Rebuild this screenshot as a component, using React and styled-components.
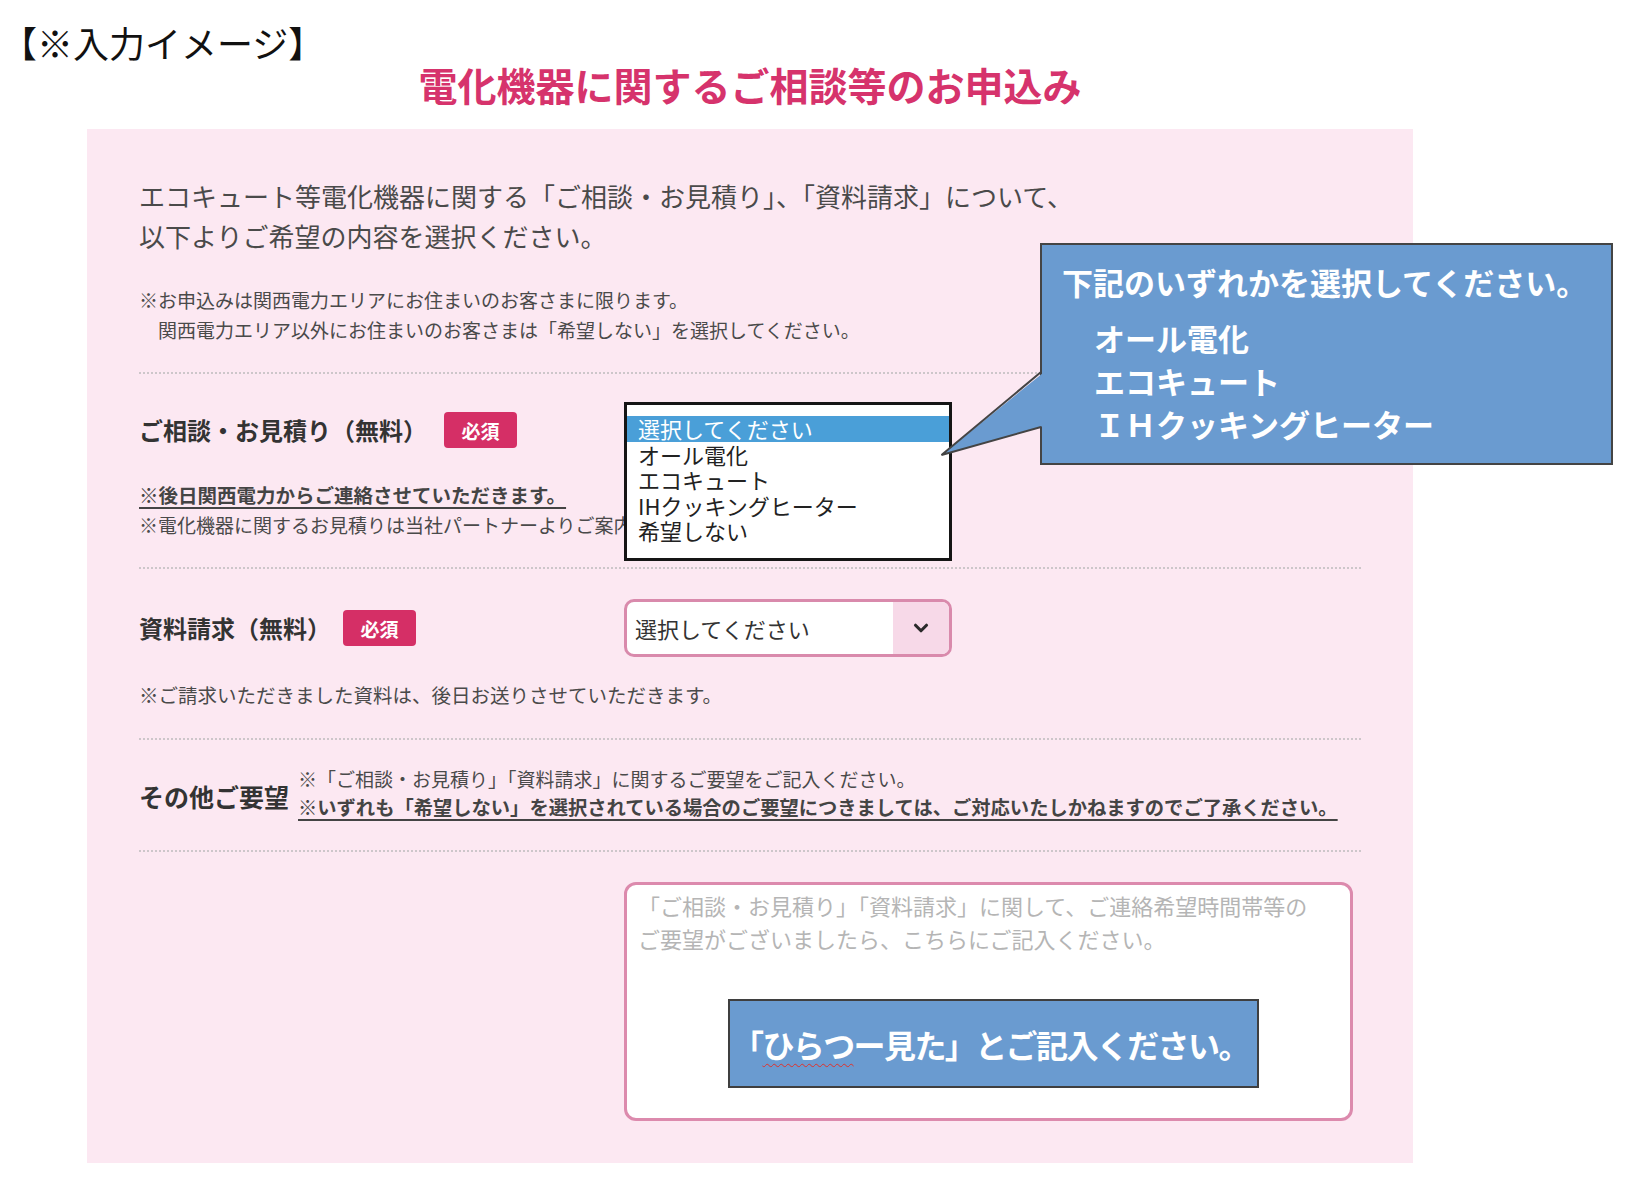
import React from "react";
import styled, { createGlobalStyle } from "styled-components";
import { ChevronDown } from "lucide-react";

const GlobalStyle = createGlobalStyle`
  html, body { margin: 0; padding: 0; background: #ffffff; }
  body { font-family: "Noto Sans CJK JP", "Noto Sans", sans-serif; color: #333; }
  * { box-sizing: border-box; }
`;

const Page = styled.div`
  position: relative;
  width: 1634px;
  min-height: 1190px;
  padding-top: 22px;
`;

const Caption = styled.div`
  margin: 0 0 0 1px;
  font-size: 36px;
  line-height: 41px;
  color: #111;
`;

const Title = styled.h1`
  margin: 0 0 0 87px;
  width: 1326px;
  text-align: center;
  font-size: 39px;
  line-height: 42px;
  font-weight: 700;
  color: #d6336c;
`;

const Panel = styled.section`
  margin: 24px 0 0 87px;
  width: 1326px;
  background: #fce8f2;
  padding: 47px 52px 42px;
`;

const Intro = styled.p`
  margin: 0;
  font-size: 26px;
  line-height: 40px;
  color: #4a4a4a;
`;

const Notice = styled.p`
  margin: 29px 0 0;
  font-size: 19px;
  line-height: 30px;
  color: #4a4a4a;
`;

const Indent = styled.span`
  display: block;
  padding-left: 1em;
`;

const Divider = styled.hr`
  margin: ${(p) => p.$gap}px 0 0;
  border: 0;
  border-top: 2px dotted #cdc6ca;
  height: 0;
`;

const Section = styled.div`
  padding-top: ${(p) => p.$top}px;
`;

const FieldRow = styled.div`
  display: grid;
  grid-template-columns: 485px 328px;
  align-items: center;
  height: 58px;
`;

const LabelGroup = styled.div`
  display: flex;
  align-items: center;
  gap: ${(p) => p.$gap || 16}px;
`;

const FieldLabel = styled.span`
  font-size: 24px;
  line-height: 30px;
  font-weight: 700;
  color: #333;
  white-space: nowrap;
`;

const Badge = styled.span`
  display: inline-flex;
  align-items: center;
  justify-content: center;
  width: 73px;
  height: 36px;
  border-radius: 4px;
  background: #d52f66;
  color: #fff;
  font-size: 19px;
  font-weight: 700;
`;

const SelectSlot = styled.div`
  position: relative;
  height: 58px;
`;

const ListBox = styled.div`
  position: absolute;
  top: 1px;
  left: 0;
  width: 328px;
  height: 159px;
  border: 3px solid #151515;
  background: #fff;
  padding-top: 11px;
  z-index: 2;
`;

const Option = styled.div`
  height: 25.6px;
  line-height: 25.6px;
  padding-left: 11px;
  font-size: 22px;
  color: ${(p) => (p.$active ? "#fff" : "#222")};
  background: ${(p) => (p.$active ? "#4a9fd8" : "transparent")};
  white-space: nowrap;
`;

const SelectBox = styled.div`
  display: flex;
  height: 58px;
  border: 3px solid #d98aac;
  border-radius: 10px;
  background: #fff;
  overflow: hidden;
`;

const SelectValue = styled.span`
  flex: 1;
  display: flex;
  align-items: center;
  padding-left: 8px;
  font-size: 22px;
  color: #333;
`;

const SelectArrow = styled.span`
  width: 56px;
  display: flex;
  align-items: center;
  justify-content: center;
  background: #f7d9e8;
  color: #2a2a2a;
`;

const FieldNotes = styled.div`
  margin-top: ${(p) => p.$gap}px;
  font-size: ${(p) => p.$size || 19}px;
  line-height: 30px;
  color: #4a4a4a;
  white-space: nowrap;
`;

const Strong = styled.span`
  display: block;
  font-size: ${(p) => p.$size || 19.5}px;
  font-weight: 700;
  color: #444;
  text-decoration: underline;
  text-underline-offset: 4px;
  text-decoration-thickness: 1.5px;
  width: max-content;
`;

const OtherRow = styled.div`
  display: flex;
  align-items: center;
  gap: 9px;
`;

const OtherLabel = styled.span`
  font-size: 25px;
  line-height: 30px;
  font-weight: 700;
  color: #333;
  padding-top: 6px;
  white-space: nowrap;
`;

const OtherNotes = styled.div`
  font-size: 19px;
  line-height: 29px;
  color: #4a4a4a;
  white-space: nowrap;
`;

const TextWrap = styled.div`
  position: relative;
  margin: 30px 0 0 485px;
  width: 729px;
  height: 239px;
  border: 3px solid #dc8aad;
  border-radius: 12px;
  background: #fff;
  overflow: hidden;
`;

const TextArea = styled.textarea`
  display: block;
  width: 100%;
  height: 100%;
  border: 0;
  outline: none;
  resize: none;
  background: transparent;
  padding: 4px 6px 0 11px;
  font-family: "Noto Sans CJK JP", sans-serif;
  font-size: 22px;
  line-height: 33px;
  color: #333;
  &::placeholder { color: #b5b5b5; }
`;

const Annotation = styled.div`
  position: absolute;
  left: 101px;
  top: 114px;
  width: 531px;
  height: 89px;
  display: flex;
  align-items: center;
  padding-left: 2px;
  background: #6a9bd0;
  border: 2px solid #3f3f3f;
  color: #fff;
  font-size: 32px;
  font-weight: 700;
  letter-spacing: -1.6px;
  white-space: nowrap;
`;

const Wavy = styled.span`
  text-decoration-line: underline;
  text-decoration-style: wavy;
  text-decoration-color: #e0302a;
  text-decoration-thickness: 1px;
  text-underline-offset: 5px;
`;

const Callout = styled.div`
  position: absolute;
  left: 940px;
  top: 243px;
  width: 673px;
  height: 222px;
  z-index: 5;
`;

const CalloutBox = styled.div`
  margin-left: 100px;
  width: 573px;
  height: 222px;
  background: #6a9bd0;
  border: 2px solid #444;
  padding: 17px 0 0 20px;
  color: #fff;
  font-weight: 700;
`;

const CalloutTitle = styled.div`
  font-size: 31px;
  line-height: 40px;
  white-space: nowrap;
`;

const CalloutList = styled.div`
  margin-top: 14px;
  padding-left: 32px;
  font-size: 31px;
  line-height: 43px;
  white-space: nowrap;
`;

const Tail = styled.svg`
  position: absolute;
  left: 0;
  top: 0;
  overflow: visible;
`;

const options = ["選択してください", "オール電化", "エコキュート", "IHクッキングヒーター", "希望しない"];

export default function App() {
  return (
    <>
      <GlobalStyle />
      <Page>
        <Caption>【※入力イメージ】</Caption>
        <Title>電化機器に関するご相談等のお申込み</Title>
        <Panel>
          <Intro>
            エコキュート等電化機器に関する「ご相談・お見積り」、「資料請求」について、
            <br />
            以下よりご希望の内容を選択ください。
          </Intro>
          <Notice>
            ※お申込みは関西電力エリアにお住まいのお客さまに限ります。
            <Indent>関西電力エリア以外にお住まいのお客さまは「希望しない」を選択してください。</Indent>
          </Notice>
          <Divider $gap={27} />

          <Section $top={27}>
            <FieldRow>
              <LabelGroup $gap={17}>
                <FieldLabel>ご相談・お見積り（無料）</FieldLabel>
                <Badge>必須</Badge>
              </LabelGroup>
              <SelectSlot>
                <ListBox role="listbox">
                  {options.map((o, i) => (
                    <Option key={o} role="option" $active={i === 0}>
                      {o}
                    </Option>
                  ))}
                </ListBox>
              </SelectSlot>
            </FieldRow>
            <FieldNotes $gap={21}>
              <Strong>※後日関西電力からご連絡させていただきます。</Strong>
              ※電化機器に関するお見積りは当社パートナーよりご案内させていただきます。
            </FieldNotes>
          </Section>
          <Divider $gap={27} />

          <Section $top={30}>
            <FieldRow>
              <LabelGroup $gap={12}>
                <FieldLabel>資料請求（無料）</FieldLabel>
                <Badge>必須</Badge>
              </LabelGroup>
              <SelectBox>
                <SelectValue>選択してください</SelectValue>
                <SelectArrow>
                  <ChevronDown size={22} strokeWidth={3.4} />
                </SelectArrow>
              </SelectBox>
            </FieldRow>
            <FieldNotes $gap={23} $size={19.5}>
              ※ご請求いただきました資料は、後日お送りさせていただきます。
            </FieldNotes>
          </Section>
          <Divider $gap={28} />

          <Section $top={24}>
            <OtherRow>
              <OtherLabel>その他ご要望</OtherLabel>
              <OtherNotes>
                ※「ご相談・お見積り」「資料請求」に関するご要望をご記入ください。
                <Strong $size={19.3}>
                  ※いずれも「希望しない」を選択されている場合のご要望につきましては、ご対応いたしかねますのでご了承ください。
                </Strong>
              </OtherNotes>
            </OtherRow>
          </Section>
          <Divider $gap={28} />

          <TextWrap>
            <TextArea
              placeholder={
                "「ご相談・お見積り」「資料請求」に関して、ご連絡希望時間帯等の\nご要望がございましたら、こちらにご記入ください。"
              }
            />
            <Annotation>
              「<Wavy>ひらつ</Wavy>ー見た」とご記入ください。
            </Annotation>
          </TextWrap>
        </Panel>

        <Callout>
          <CalloutBox>
            <CalloutTitle>下記のいずれかを選択してください。</CalloutTitle>
            <CalloutList>
              オール電化
              <br />
              エコキュート
              <br />
              ＩＨクッキングヒーター
            </CalloutList>
          </CalloutBox>
          <Tail width="104" height="222" viewBox="0 0 104 222">
            <polygon points="103,130 1.5,212 103,183" fill="#6a9bd0" />
            <polyline points="101,129 1.5,212 101,184" fill="none" stroke="#444" strokeWidth="2" />
          </Tail>
        </Callout>
      </Page>
    </>
  );
}
